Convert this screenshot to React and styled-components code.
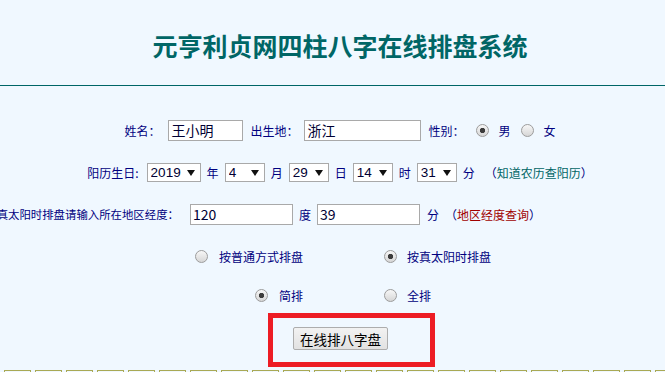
import React from "react";
import styled, { createGlobalStyle } from "styled-components";

const GlobalStyle = createGlobalStyle`
  html, body {
    margin: 0;
    padding: 0;
    background: #f0f8ff;
    overflow: hidden;
  }
  body {
    font-family: "Noto Sans CJK SC", "Noto Sans", sans-serif;
  }
`;

const Page = styled.div`
  width: 665px;
  height: 372px;
  overflow: hidden;
  background: #f0f8ff;
`;

const Header = styled.header`
  height: 86px;
  box-sizing: border-box;
  padding: 4px 0 0 15px;
  border-bottom: 1px solid #006666;
  display: flex;
  align-items: center;
  justify-content: center;
`;

const Title = styled.h1`
  margin: 0;
  font-size: 25px;
  font-weight: 700;
  color: #006666;
  white-space: nowrap;
`;

const Form = styled.form`
  padding-top: 23px;
`;

const Row = styled.div`
  height: ${(p) => p.$h || 42}px;
  display: flex;
  align-items: center;
  gap: 6px;
  white-space: nowrap;
  justify-content: ${(p) => (p.$end ? "flex-end" : "center")};
  padding: ${(p) => (p.$end ? "0 124px 0 0" : "0 0 0 15px")};
`;

const ChoiceRow = styled.div`
  height: ${(p) => p.$h || 42}px;
  display: grid;
  grid-template-columns: 303px 1fr;
  column-gap: 81px;
  align-items: center;
`;

const Text = styled.span`
  font-size: ${(p) => p.$size || 12}px;
  color: #000080;
  margin-left: ${(p) => p.$ml || 0}px;
`;

const Link = styled.a`
  font-size: 12px;
  color: #000080;
  text-decoration: none;
  margin-left: ${(p) => p.$ml || 0}px;
  & b {
    font-weight: 400;
    color: ${(p) => p.$color};
  }
`;

const TextInput = styled.input`
  box-sizing: border-box;
  width: ${(p) => p.$w}px;
  height: 21px;
  border: 1px solid #a9a9a9;
  background: #fff;
  padding: 0 2px;
  font-family: "Noto Sans CJK SC", "Liberation Sans", sans-serif;
  font-size: 14px;
  color: #000033;
  margin-left: ${(p) => p.$ml || 0}px;
  outline: none;
`;

const SelectWrap = styled.span`
  position: relative;
  display: inline-block;
  margin-left: ${(p) => p.$ml || 0}px;
`;

const Select = styled.select`
  appearance: none;
  -webkit-appearance: none;
  box-sizing: border-box;
  width: ${(p) => p.$w}px;
  height: 19px;
  border: 1px solid #a9a9a9;
  border-radius: 0;
  background: #fff;
  padding: 0 0 0 3px;
  font-family: "Liberation Sans", Arial, sans-serif;
  font-size: 13.5px;
  color: #000033;
  display: block;
`;

const Arrow = styled.span`
  position: absolute;
  right: 6px;
  top: 7px;
  width: 0;
  height: 0;
  border-left: 4px solid transparent;
  border-right: 4px solid transparent;
  border-top: 6px solid #111;
  pointer-events: none;
`;

const Choice = styled.label`
  display: inline-flex;
  align-items: center;
  gap: ${(p) => p.$gap || 10}px;
  margin-left: ${(p) => p.$ml || 0}px;
  justify-self: ${(p) => (p.$right ? "end" : "start")};
  font-size: 12px;
  color: #000080;
`;

const Radio = styled.input.attrs({ type: "radio" })`
  appearance: none;
  -webkit-appearance: none;
  margin: 0;
  width: 13px;
  height: 13px;
  border-radius: 50%;
  border: 1px solid #9c9c9c;
  box-sizing: border-box;
  background: linear-gradient(#f7f7f7, #d6d6d6);
  &:checked {
    background: radial-gradient(circle, #3c3c3c 0 2.3px, transparent 3px),
      linear-gradient(#f7f7f7, #d6d6d6);
  }
`;

const Mark = styled.span`
  display: inline-block;
  margin: 0 0 0 23px;
  border: 5px solid #ed1c24;
  padding: 9px 42px 12px 20px;
`;

const Submit = styled.button`
  display: block;
  box-sizing: border-box;
  width: 95px;
  height: 23px;
  border: 1px solid #adadad;
  border-radius: 2px;
  background: linear-gradient(#f2f2f2, #e2e2e2);
  font-family: "Noto Sans CJK SC", sans-serif;
  font-size: 13.5px;
  color: #000;
  padding: 0;
`;

const Cells = styled.div`
  display: flex;
  gap: 4px;
  padding: 3px 0 0 4px;
`;

const Cell = styled.div`
  flex: none;
  width: 27px;
  height: 24px;
  box-sizing: border-box;
  border: 1px solid #a9a955;
`;

function Dropdown({ w, value, options, ml }) {
  return (
    <SelectWrap $ml={ml}>
      <Select $w={w} defaultValue={value}>
        {options.map((o) => (
          <option key={o}>{o}</option>
        ))}
      </Select>
      <Arrow />
    </SelectWrap>
  );
}

const range = (a, b) => Array.from({ length: b - a + 1 }, (_, i) => String(a + i));

export default function App() {
  return (
    <Page>
      <GlobalStyle />
      <Header>
        <Title>元亨利贞网四柱八字在线排盘系统</Title>
      </Header>
      <Form onSubmit={(e) => e.preventDefault()}>
        <Row>
          <Text>姓名：</Text>
          <TextInput $w={75} defaultValue="王小明" $ml={2} />
          <Text $ml={1}>出生地：</Text>
          <TextInput $w={117} defaultValue="浙江" />
          <Text $ml={1}>性别：</Text>
          <Choice $ml={5}>
            <Radio name="sex" defaultChecked />男
          </Choice>
          <Choice $ml={4}>
            <Radio name="sex" />女
          </Choice>
        </Row>
        <Row>
          <Text>阳历生日: </Text>
          <Dropdown w={54} value="2019" options={range(1900, 2100)} ml={2} />
          <Text>年</Text>
          <Dropdown w={40} value="4" options={range(1, 12)} />
          <Text>月</Text>
          <Dropdown w={40} value="29" options={range(1, 31)} />
          <Text>日</Text>
          <Dropdown w={40} value="14" options={range(0, 23)} />
          <Text>时</Text>
          <Dropdown w={40} value="31" options={range(0, 59)} />
          <Text>分</Text>
          <Link $ml={4} $color="#006666" href="#">
            （<b>知道农历查阳历</b>）
          </Link>
        </Row>
        <Row $end>
          <Text $size={11.4}>按真太阳时排盘请输入所在地区经度：</Text>
          <TextInput $w={103} defaultValue="120" $ml={5} />
          <Text>度</Text>
          <TextInput $w={103} defaultValue="39" />
          <Text $ml={1}>分</Text>
          <Link $color="#a00000" href="#">
            （<b>地区经度查询</b>）
          </Link>
        </Row>
        <ChoiceRow>
          <Choice $right $gap={11}>
            <Radio name="mode" />按普通方式排盘
          </Choice>
          <Choice $gap={10}>
            <Radio name="mode" defaultChecked />按真太阳时排盘
          </Choice>
        </ChoiceRow>
        <ChoiceRow $h={36}>
          <Choice $right $gap={11}>
            <Radio name="detail" defaultChecked />简排
          </Choice>
          <Choice $gap={10}>
            <Radio name="detail" />全排
          </Choice>
        </ChoiceRow>
        <Row $h={54}>
          <Mark>
            <Submit type="submit">在线排八字盘</Submit>
          </Mark>
        </Row>
      </Form>
      <Cells>
        {Array.from({ length: 22 }, (_, i) => (
          <Cell key={i} />
        ))}
      </Cells>
    </Page>
  );
}
